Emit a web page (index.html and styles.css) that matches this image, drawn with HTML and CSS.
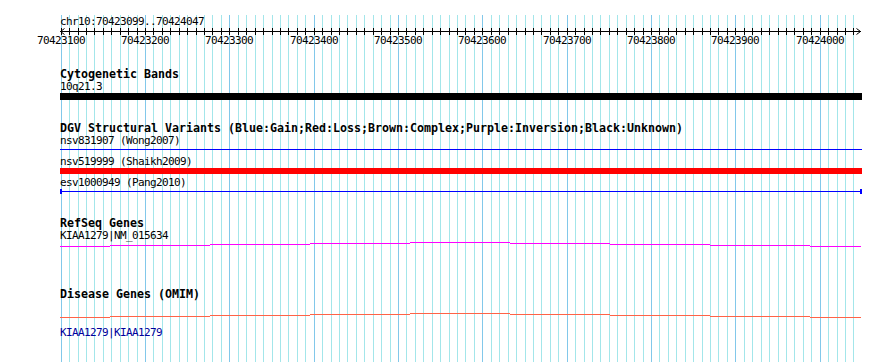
FILE: index.html
```html
<!DOCTYPE html>
<html>
<head>
<meta charset="utf-8">
<title>Genome browser - chr10:70423099..70424047</title>
<link rel="stylesheet" href="styles.css">
</head>
<body>
<div class="panel">
  <svg class="grid" width="890" height="362" viewBox="0 0 890 362" shape-rendering="crispEdges">
    <path class="grid-minor" d="M69.5 0V362M78.5 0V362M86.5 0V362M94.5 0V362M103.5 0V362M111.5 0V362M120.5 0V362M128.5 0V362M137.5 0V362M153.5 0V362M162.5 0V362M170.5 0V362M179.5 0V362M187.5 0V362M196.5 0V362M204.5 0V362M212.5 0V362M221.5 0V362M238.5 0V362M246.5 0V362M255.5 0V362M263.5 0V362M272.5 0V362M280.5 0V362M288.5 0V362M297.5 0V362M305.5 0V362M322.5 0V362M331.5 0V362M339.5 0V362M347.5 0V362M356.5 0V362M364.5 0V362M373.5 0V362M381.5 0V362M390.5 0V362M406.5 0V362M415.5 0V362M423.5 0V362M432.5 0V362M440.5 0V362M449.5 0V362M457.5 0V362M465.5 0V362M474.5 0V362M491.5 0V362M499.5 0V362M508.5 0V362M516.5 0V362M525.5 0V362M533.5 0V362M541.5 0V362M550.5 0V362M558.5 0V362M575.5 0V362M584.5 0V362M592.5 0V362M600.5 0V362M609.5 0V362M617.5 0V362M626.5 0V362M634.5 0V362M643.5 0V362M659.5 0V362M668.5 0V362M676.5 0V362M685.5 0V362M693.5 0V362M702.5 0V362M710.5 0V362M718.5 0V362M727.5 0V362M744.5 0V362M752.5 0V362M761.5 0V362M769.5 0V362M778.5 0V362M786.5 0V362M794.5 0V362M803.5 0V362M811.5 0V362M828.5 0V362M837.5 0V362M845.5 0V362M853.5 0V362"/>
    <path class="grid-major" d="M61.5 0V362M145.5 0V362M229.5 0V362M314.5 0V362M398.5 0V362M482.5 0V362M567.5 0V362M651.5 0V362M735.5 0V362M820.5 0V362"/>
  </svg>

  <div class="tracks">
    <div class="lbl lbl-chrom">chr10:70423099..70424047</div>
    <svg class="glyph ruler" width="890" height="19" viewBox="0 0 890 19" shape-rendering="crispEdges">
      <rect x="60" y="3" width="801" height="1" fill="#000"/>
      <path class="ticks" d="M61.5 0v7M69.5 0v7M78.5 0v7M86.5 0v7M94.5 0v7M103.5 0v7M111.5 0v7M120.5 0v7M128.5 0v7M137.5 0v7M145.5 0v7M153.5 0v7M162.5 0v7M170.5 0v7M179.5 0v7M187.5 0v7M196.5 0v7M204.5 0v7M212.5 0v7M221.5 0v7M229.5 0v7M238.5 0v7M246.5 0v7M255.5 0v7M263.5 0v7M272.5 0v7M280.5 0v7M288.5 0v7M297.5 0v7M305.5 0v7M314.5 0v7M322.5 0v7M331.5 0v7M339.5 0v7M347.5 0v7M356.5 0v7M364.5 0v7M373.5 0v7M381.5 0v7M390.5 0v7M398.5 0v7M406.5 0v7M415.5 0v7M423.5 0v7M432.5 0v7M440.5 0v7M449.5 0v7M457.5 0v7M465.5 0v7M474.5 0v7M482.5 0v7M491.5 0v7M499.5 0v7M508.5 0v7M516.5 0v7M525.5 0v7M533.5 0v7M541.5 0v7M550.5 0v7M558.5 0v7M567.5 0v7M575.5 0v7M584.5 0v7M592.5 0v7M600.5 0v7M609.5 0v7M617.5 0v7M626.5 0v7M634.5 0v7M643.5 0v7M651.5 0v7M659.5 0v7M668.5 0v7M676.5 0v7M685.5 0v7M693.5 0v7M702.5 0v7M710.5 0v7M718.5 0v7M727.5 0v7M735.5 0v7M744.5 0v7M752.5 0v7M761.5 0v7M769.5 0v7M778.5 0v7M786.5 0v7M794.5 0v7M803.5 0v7M811.5 0v7M820.5 0v7M828.5 0v7M837.5 0v7M845.5 0v7M853.5 0v7"/>
      <path class="arrow" d="M64.5 0.5L60.5 3.5L64.5 6.5M856.5 0.5L860.5 3.5L856.5 6.5" shape-rendering="auto"/>
      <g class="ruler-labels">
        <text x="61" y="16">70423100</text>
        <text x="145" y="16">70423200</text>
        <text x="229" y="16">70423300</text>
        <text x="314" y="16">70423400</text>
        <text x="398" y="16">70423500</text>
        <text x="482" y="16">70423600</text>
        <text x="567" y="16">70423700</text>
        <text x="651" y="16">70423800</text>
        <text x="735" y="16">70423900</text>
        <text x="820" y="16">70424000</text>
      </g>
    </svg>

    <section class="track track-cyto">
      <div class="ttl">Cytogenetic Bands</div>
      <div class="lbl">10q21.3</div>
      <svg class="glyph" width="890" height="7" viewBox="0 0 890 7" shape-rendering="crispEdges">
        <rect x="60" y="0" width="802" height="7" fill="#000"/>
      </svg>
    </section>

    <section class="track track-dgv">
      <div class="ttl">DGV Structural Variants (Blue:Gain;Red:Loss;Brown:Complex;Purple:Inversion;Black:Unknown)</div>
      <div class="lbl">nsv831907 (Wong2007)</div>
      <svg class="glyph" width="890" height="8" viewBox="0 0 890 8" shape-rendering="crispEdges">
        <rect x="60" y="2" width="802" height="1" fill="#0000ff"/>
      </svg>
      <div class="lbl">nsv519999 (Shaikh2009)</div>
      <svg class="glyph" width="890" height="8" viewBox="0 0 890 8" shape-rendering="crispEdges">
        <rect x="60" y="0" width="802" height="6" fill="#ff0000"/>
      </svg>
      <div class="lbl">esv1000949 (Pang2010)</div>
      <svg class="glyph" width="890" height="8" viewBox="0 0 890 8" shape-rendering="crispEdges">
        <rect x="60" y="2" width="802" height="1" fill="#0000ff"/>
        <rect x="60" y="0" width="2" height="5" fill="#0000ff"/>
        <rect x="860" y="0" width="2" height="5" fill="#0000ff"/>
      </svg>
    </section>

    <section class="track track-refseq">
      <div class="ttl">RefSeq Genes</div>
      <div class="lbl">KIAA1279|NM_015634</div>
      <svg class="glyph" width="890" height="6" viewBox="0 0 890 6" shape-rendering="crispEdges">
        <path class="step step-magenta" d="M60 4.5H110M110 3.5H210M210 2.5H310M310 1.5H410M410 0.5H510M510 1.5H610M610 2.5H710M710 3.5H810M810 4.5H861"/>
      </svg>
    </section>

    <section class="track track-omim">
      <div class="ttl">Disease Genes (OMIM)</div>
      <svg class="glyph" width="890" height="20" viewBox="0 0 890 20" shape-rendering="crispEdges">
        <path class="step step-orange" d="M60 17.5H110M110 16.5H210M210 15.5H310M310 14.5H410M410 13.5H510M510 14.5H610M610 15.5H710M710 16.5H810M810 17.5H861"/>
      </svg>
      <div class="lbl lbl-link">KIAA1279|KIAA1279</div>
    </section>
  </div>
</div>
</body>
</html>
```

FILE: styles.css
```css
html, body {
  margin: 0;
  padding: 0;
  background: #ffffff;
}

body {
  width: 890px;
  height: 362px;
  overflow: hidden;
}

.panel {
  position: relative;
  width: 890px;
  height: 362px;
}

.grid {
  position: absolute;
  left: 0;
  top: 0;
}

.grid-minor {
  stroke: #a3e6ea;
  stroke-width: 1;
  fill: none;
}

.grid-major {
  stroke: #82c8ea;
  stroke-width: 1;
  fill: none;
}

.tracks {
  position: relative;
}

.lbl {
  padding-left: 60px;
  height: 13px;
  font-family: "DejaVu Sans Mono", monospace;
  font-size: 11px;
  letter-spacing: -0.62px;
  line-height: 13px;
  color: #000;
  white-space: nowrap;
}

.ttl {
  padding-left: 60px;
  height: 12px;
  font-family: "DejaVu Sans Mono", monospace;
  font-weight: bold;
  font-size: 11.63px;
  line-height: 12px;
  color: #000;
  white-space: nowrap;
}

.glyph {
  display: block;
}

.lbl-chrom {
  margin-top: 15px;
}

.ticks,
.arrow {
  stroke: #000;
  stroke-width: 1;
  fill: none;
}

.ruler-labels text {
  font-family: "DejaVu Sans Mono", monospace;
  font-size: 11px;
  letter-spacing: -0.62px;
  text-anchor: middle;
  fill: #000;
}

.track-cyto {
  margin-top: 21px;
}

.track-dgv {
  margin-top: 22px;
}

.track-refseq {
  margin-top: 20px;
}

.track-omim {
  margin-top: 40px;
}

.step {
  fill: none;
  stroke-width: 1;
}

.step-magenta {
  stroke: #ff00ff;
}

.step-orange {
  stroke: #ff6347;
}

.lbl-link {
  margin-top: 6px;
  color: #00009c;
}
```
